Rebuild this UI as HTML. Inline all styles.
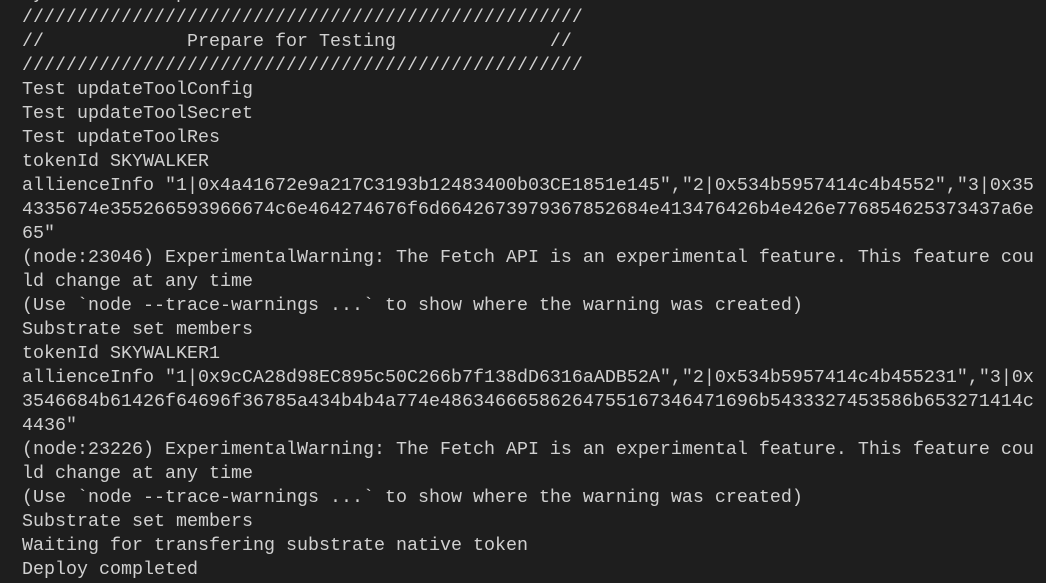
<!DOCTYPE html>
<html><head><meta charset="utf-8"><style>
html,body{margin:0;padding:0;background:#1e1e1e;width:1046px;height:583px;overflow:hidden}
pre{margin:0;position:absolute;left:22px;top:-18px;font-family:"Liberation Mono","DejaVu Sans Mono",monospace;font-size:18.33px;line-height:24px;color:#d0d0d0;white-space:pre}
</style></head><body><pre>Sy            p
///////////////////////////////////////////////////
//             Prepare for Testing              //
///////////////////////////////////////////////////
Test updateToolConfig
Test updateToolSecret
Test updateToolRes
tokenId SKYWALKER
allienceInfo "1|0x4a41672e9a217C3193b12483400b03CE1851e145","2|0x534b5957414c4b4552","3|0x35
4335674e355266593966674c6e464274676f6d6642673979367852684e413476426b4e426e776854625373437a6e
65"
(node:23046) ExperimentalWarning: The Fetch API is an experimental feature. This feature cou
ld change at any time
(Use `node --trace-warnings ...` to show where the warning was created)
Substrate set members
tokenId SKYWALKER1
allienceInfo "1|0x9cCA28d98EC895c50C266b7f138dD6316aADB52A","2|0x534b5957414c4b455231","3|0x
3546684b61426f64696f36785a434b4b4a774e48634666586264755167346471696b5433327453586b653271414c
4436"
(node:23226) ExperimentalWarning: The Fetch API is an experimental feature. This feature cou
ld change at any time
(Use `node --trace-warnings ...` to show where the warning was created)
Substrate set members
Waiting for transfering substrate native token
Deploy completed</pre></body></html>
